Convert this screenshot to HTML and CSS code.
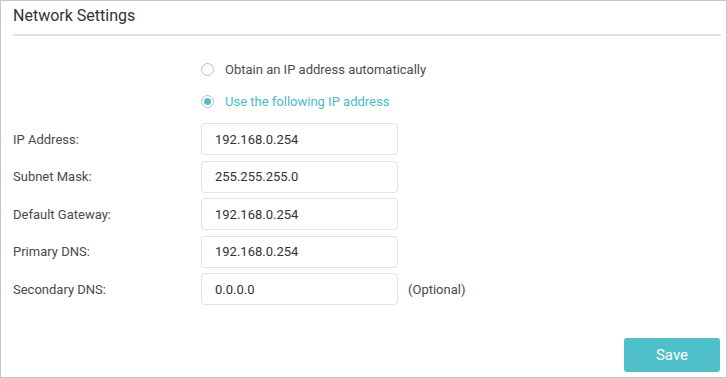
FILE: index.html
```html
<!DOCTYPE html>
<html>
<head>
<meta charset="utf-8">
<link rel="stylesheet" href="styles.css">
</head>
<body>
<div class="panel">
  <h1 class="title">Network Settings</h1>
  <div class="rule"></div>
  <div class="radios">
    <label class="radio"><span class="dot"></span><span>Obtain an IP address automatically</span></label>
    <label class="radio checked"><span class="dot"></span><span>Use the following IP address</span></label>
  </div>
  <div class="fields">
    <div class="row"><span class="label">IP Address:</span><div class="input">192.168.0.254</div></div>
    <div class="row"><span class="label">Subnet Mask:</span><div class="input">255.255.255.0</div></div>
    <div class="row"><span class="label">Default Gateway:</span><div class="input">192.168.0.254</div></div>
    <div class="row"><span class="label">Primary DNS:</span><div class="input">192.168.0.254</div></div>
    <div class="row"><span class="label">Secondary DNS:</span><div class="input">0.0.0.0</div><span class="hint">(Optional)</span></div>
  </div>
  <div class="footer"><button class="save">Save</button></div>
</div>
</body>
</html>
```
FILE: styles.css
```css
* { box-sizing: border-box; }
html, body { margin: 0; padding: 0; background: #fff; }
body { font-family: Roboto, "Liberation Sans", sans-serif; }
.panel {
  width: 727px;
  height: 378px;
  border: 1px solid #c6c6c6;
  padding: 0 6px 5px 12px;
  display: flex;
  flex-direction: column;
}
.title {
  margin: 0;
  padding-top: 5px;
  font-size: 16px;
  line-height: 20px;
  font-weight: 400;
  color: #333;
}
.rule {
  margin-top: 8px;
  height: 2px;
  background: #e0e0e0;
  width: 708px;
}
.radios {
  margin-top: 23px;
  padding-left: 188px;
  display: flex;
  flex-direction: column;
  gap: 12px;
}
.radio {
  display: flex;
  align-items: center;
  height: 20px;
  font-size: 13px;
  color: #4d4d4d;
}
.dot {
  width: 13px;
  height: 13px;
  border: 1px solid #bdbdbd;
  border-radius: 50%;
  margin-right: 11px;
  display: flex;
  align-items: center;
  justify-content: center;
}
.radio.checked { color: #4ab9c6; }
.radio.checked .dot::after {
  content: "";
  width: 7px;
  height: 7px;
  border-radius: 50%;
  background: #4fbfc9;
}
.fields {
  margin-top: 12px;
  display: flex;
  flex-direction: column;
  gap: 5.5px;
}
.row {
  display: flex;
  align-items: center;
  height: 32px;
}
.label {
  width: 188px;
  font-size: 13px;
  color: #4a4a4a;
}
.input {
  width: 197px;
  height: 32px;
  border: 1px solid #e2e2e2;
  border-radius: 4px;
  padding-left: 13px;
  display: flex;
  align-items: center;
  font-size: 13px;
  color: #333;
}
.hint {
  margin-left: 10px;
  font-size: 13px;
  color: #4a4a4a;
}
.footer {
  margin-top: auto;
  display: flex;
  justify-content: flex-end;
}
.save {
  width: 96px;
  height: 34px;
  border: none;
  border-radius: 3px;
  background: #4fbfc9;
  color: #fff;
  font-family: Roboto, "Liberation Sans", sans-serif;
  font-size: 15px;
  padding: 0;
}
```
